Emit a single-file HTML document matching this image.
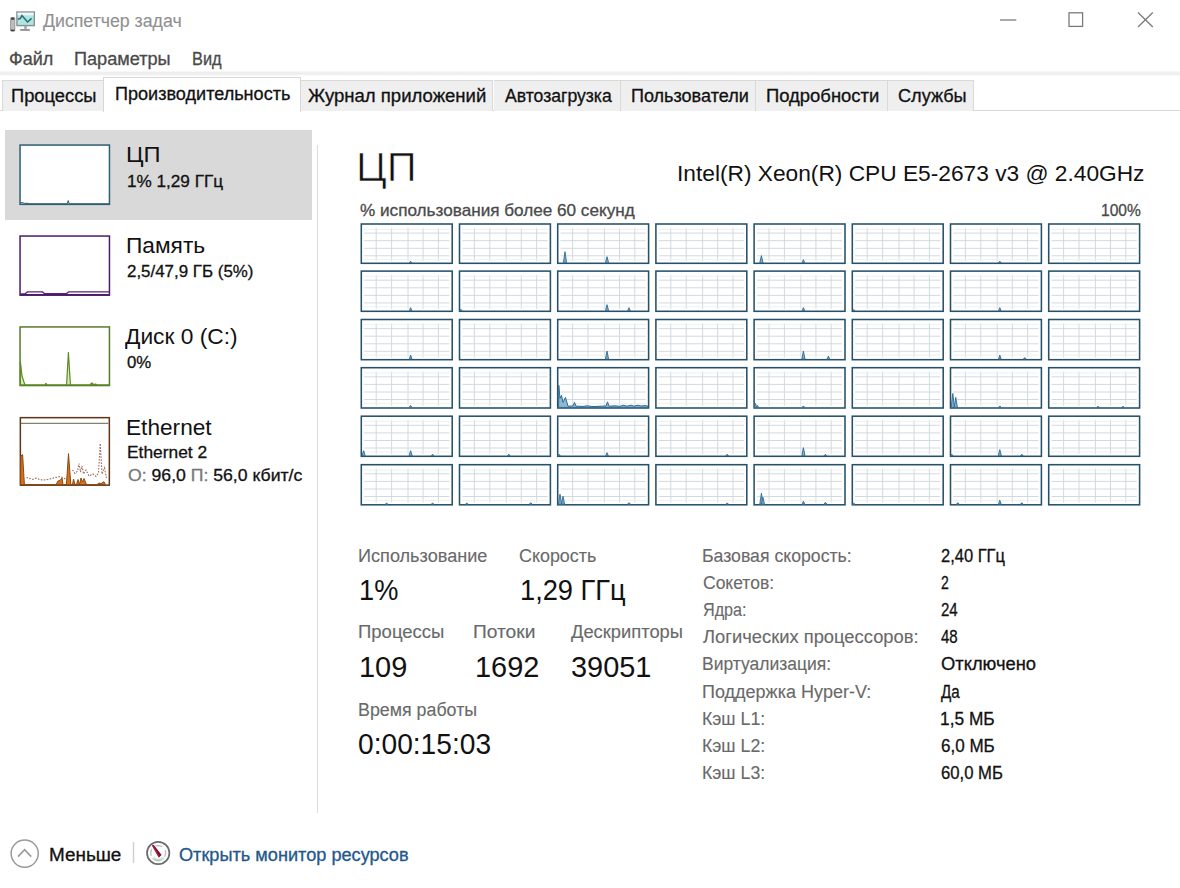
<!DOCTYPE html>
<html lang="ru"><head><meta charset="utf-8"><title>Диспетчер задач</title>
<style>
html,body{margin:0;padding:0;}
body{width:1180px;height:888px;position:relative;overflow:hidden;background:#fff;font-family:"Liberation Sans",sans-serif;}
.t{position:absolute;white-space:nowrap;transform-origin:0 0;display:block;}
.a{position:absolute;}
svg{position:absolute;left:0;top:0;}
.tab{top:80.3px;height:30.5px;box-sizing:border-box;border:1.2px solid #d9d9d9;border-bottom:none;background:#efefef;}
.s{-webkit-text-stroke:0.3px currentColor;}
.thin{-webkit-text-stroke:0.7px #fff;}
.g{-webkit-text-stroke:0.12px currentColor;}

</style></head>
<body>
<svg width="60" height="45" viewBox="0 0 60 45">
<rect x="10.6" y="17.5" width="4.2" height="13.6" rx="1" fill="#bdbdbd" stroke="#8a8a8a" stroke-width="0.8"/>
<rect x="11.2" y="17.6" width="3" height="2.2" fill="#444"/>
<rect x="10.8" y="29.6" width="3.8" height="1.6" fill="#444"/>
<rect x="16.9" y="12" width="17.4" height="13.6" fill="#aee6e4" stroke="#8a8f92" stroke-width="1.4"/>
<rect x="17.6" y="12.7" width="16" height="2.6" fill="#f4f4f8"/>
<polyline points="18,19.2 20.4,18.4 22,15.6 27.5,22 31.6,18.4" fill="none" stroke="#2b6a6e" stroke-width="1.5"/>
<rect x="24.2" y="26.2" width="2.6" height="2.6" fill="#9aa0a3"/>
<rect x="20.2" y="29.2" width="9.6" height="1.5" fill="#777"/>
</svg>
<svg width="1180" height="40" viewBox="0 0 1180 40">
<line x1="1000" y1="20" x2="1016.3" y2="20" stroke="#7a7a7a" stroke-width="1.3"/>
<rect x="1069" y="12.8" width="13.6" height="13.6" fill="none" stroke="#7a7a7a" stroke-width="1.3"/>
<path d="M1138 12.5 L1152.8 27 M1152.8 12.5 L1138 27" stroke="#7a7a7a" stroke-width="1.3" fill="none"/>
</svg>
<div class="a" style="left:0;top:70.5px;width:1180px;height:5px;background:linear-gradient(#fafafa,#ececec 45%,#eeeeee 60%,#fbfbfb)"></div>
<div class="a" style="left:0;top:110.2px;width:1180px;height:1.2px;background:#d7d7d7"></div>
<div class="a tab" style="left:1.8px;width:102.0px;"></div>
<div class="a tab" style="left:300.7px;width:192.8px;border-left:none;"></div>
<div class="a tab" style="left:493.5px;width:127.5px;border-left:none;"></div>
<div class="a tab" style="left:621.0px;width:135.4px;border-left:none;"></div>
<div class="a tab" style="left:756.4px;width:131.4px;border-left:none;"></div>
<div class="a tab" style="left:887.8px;width:86.2px;border-left:none;"></div>
<div class="a" style="left:103.3px;top:77.2px;width:197.9px;height:34.6px;box-sizing:border-box;border:1.2px solid #d7d7d7;border-bottom:none;background:#fff"></div>
<div class="a" style="left:5px;top:130px;width:307px;height:89.5px;background:#d9d9d9"></div>
<div class="a" style="left:316.8px;top:144.5px;width:1.3px;height:668px;background:#dcdcdc"></div>
<svg width="330" height="500" viewBox="0 0 330 500">
<rect x="20.05" y="145.05" width="89.4" height="59.3" fill="#fff" stroke="#2b6075" stroke-width="1.5"/>
<polyline points="20.5,203.4 21,202.6 23,202.8 24.5,203.4 27,203.2 29,203.8 67.2,203.8 68.2,200.6 69.2,203.8 109,203.8" fill="none" stroke="#2d5a6b" stroke-width="1"/>
<rect x="20.05" y="236.05" width="89.4" height="59.1" fill="#fff" stroke="#4d1a6a" stroke-width="1.5"/>
<path d="M20.5,293.8 L25,293.8 L27.5,291.9 L42.5,291.9 L44.5,293.6 L66.5,293.6 L68.7,291.9 L109,291.9" fill="none" stroke="#5a2278" stroke-width="1.3"/>
<rect x="20" y="294" width="89.5" height="1.6" fill="#4d1a6a"/>
<rect x="20.05" y="326.95" width="89.4" height="58.6" fill="#fff" stroke="#587a2c" stroke-width="1.5"/>
<path d="M20.4,384.8 L20.4,362 L22,376 L24.8,384.6 L45,384.8 L45.9,383.4 L46.8,384.8 L66.6,384.8 L68.4,352.5 L70.4,384.8 L90,384.8 L92,383 L93.5,384.6 L95.5,384 L97,384.8 L109,384.8 Z" fill="#d8ecb8" stroke="#5b8a24" stroke-width="1.2" stroke-linejoin="round"/>
<rect x="20.35" y="417.65" width="89" height="67.5" fill="#fff" stroke="#5e3516" stroke-width="1.5"/>
<line x1="21" y1="423.4" x2="108.6" y2="423.4" stroke="#83836a" stroke-width="1.2"/>
<path d="M20.6,484.6 L20.8,456 L22.6,454.6 L24.4,484.6 L56,484.6 L58,481 L60,480.4 L62,478 L63,484.6 L66.4,484.6 L68.5,453.6 L70.8,484.6 L72.5,484.6 L73.5,479 L75,484.6 L76.5,484.6 L78,479.5 L79.5,484.6 L81,478 L82.5,482 L84,478.5 L86.5,484.6 L97,484.6 L99,483 L101,483.6 L104,481.8 L105.5,484.6 Z" fill="#d9701c" stroke="#8a4a14" stroke-width="1" stroke-linejoin="round"/>
<path d="M26.5,477.4 L30,478.6 L33,479.4 L36,478.2 L40,479.6 L44,480 L48,479.4 L52,478.4 L56,477.4 L60,476.6 L63,477.6 L66,479.5 M72.5,470 L75,473.5 L77.5,471 L79,463.5 L80.5,472 L82,466 L83.5,474 L86,470 L89,476 L93,474 L96,476.5 L98.5,473 L100.2,443.5 L102,474 L104.5,468 L106.5,478" fill="none" stroke="#9a6a5a" stroke-width="1.1" stroke-dasharray="1.6 1.4"/>
</svg>
<svg width="1180" height="520" viewBox="0 0 1180 520">
<g transform="translate(360.60 223.30)">
<rect x="0.7" y="0.7" width="90.9" height="39.3" fill="#fff" stroke="#25516a" stroke-width="1.55"/>
<path d="M15.6,4.5V37.7M31.0,4.5V37.7M47.4,4.5V37.7M62.5,4.5V37.7M77.8,4.5V37.7M3.5,9.8H88.8M3.5,17.4H88.8M3.5,25.0H88.8M3.5,32.5H88.8" stroke="#cdd6db" stroke-width="0.9" fill="none"/>
<path d="M3.5,5.9H88.8M3.5,36.4H88.8" stroke="#ebeff1" stroke-width="0.9" fill="none"/>
<polygon points="48.7,39.4 50.0,37.9 51.3,39.4" fill="#7fb0d0" stroke="#2e6a8e" stroke-width="0.9" stroke-linejoin="round"/>
</g>
<g transform="translate(458.80 223.30)">
<rect x="0.7" y="0.7" width="90.9" height="39.3" fill="#fff" stroke="#25516a" stroke-width="1.55"/>
<path d="M15.6,4.5V37.7M31.0,4.5V37.7M47.4,4.5V37.7M62.5,4.5V37.7M77.8,4.5V37.7M3.5,9.8H88.8M3.5,17.4H88.8M3.5,25.0H88.8M3.5,32.5H88.8" stroke="#cdd6db" stroke-width="0.9" fill="none"/>
<path d="M3.5,5.9H88.8M3.5,36.4H88.8" stroke="#ebeff1" stroke-width="0.9" fill="none"/>
</g>
<g transform="translate(557.00 223.30)">
<rect x="0.7" y="0.7" width="90.9" height="39.3" fill="#fff" stroke="#25516a" stroke-width="1.55"/>
<path d="M15.6,4.5V37.7M31.0,4.5V37.7M47.4,4.5V37.7M62.5,4.5V37.7M77.8,4.5V37.7M3.5,9.8H88.8M3.5,17.4H88.8M3.5,25.0H88.8M3.5,32.5H88.8" stroke="#cdd6db" stroke-width="0.9" fill="none"/>
<path d="M3.5,5.9H88.8M3.5,36.4H88.8" stroke="#ebeff1" stroke-width="0.9" fill="none"/>
<polygon points="6.4,39.4 8.0,28.4 9.6,39.4" fill="#7fb0d0" stroke="#2e6a8e" stroke-width="0.9" stroke-linejoin="round"/>
<polygon points="48.4,39.4 50.0,33.4 51.6,39.4" fill="#7fb0d0" stroke="#2e6a8e" stroke-width="0.9" stroke-linejoin="round"/>
</g>
<g transform="translate(655.20 223.30)">
<rect x="0.7" y="0.7" width="90.9" height="39.3" fill="#fff" stroke="#25516a" stroke-width="1.55"/>
<path d="M15.6,4.5V37.7M31.0,4.5V37.7M47.4,4.5V37.7M62.5,4.5V37.7M77.8,4.5V37.7M3.5,9.8H88.8M3.5,17.4H88.8M3.5,25.0H88.8M3.5,32.5H88.8" stroke="#cdd6db" stroke-width="0.9" fill="none"/>
<path d="M3.5,5.9H88.8M3.5,36.4H88.8" stroke="#ebeff1" stroke-width="0.9" fill="none"/>
</g>
<g transform="translate(753.40 223.30)">
<rect x="0.7" y="0.7" width="90.9" height="39.3" fill="#fff" stroke="#25516a" stroke-width="1.55"/>
<path d="M15.6,4.5V37.7M31.0,4.5V37.7M47.4,4.5V37.7M62.5,4.5V37.7M77.8,4.5V37.7M3.5,9.8H88.8M3.5,17.4H88.8M3.5,25.0H88.8M3.5,32.5H88.8" stroke="#cdd6db" stroke-width="0.9" fill="none"/>
<path d="M3.5,5.9H88.8M3.5,36.4H88.8" stroke="#ebeff1" stroke-width="0.9" fill="none"/>
<polygon points="6.4,39.4 8.0,32.4 9.6,39.4" fill="#7fb0d0" stroke="#2e6a8e" stroke-width="0.9" stroke-linejoin="round"/>
<polygon points="48.7,39.4 50.0,36.4 51.3,39.4" fill="#7fb0d0" stroke="#2e6a8e" stroke-width="0.9" stroke-linejoin="round"/>
</g>
<g transform="translate(851.60 223.30)">
<rect x="0.7" y="0.7" width="90.9" height="39.3" fill="#fff" stroke="#25516a" stroke-width="1.55"/>
<path d="M15.6,4.5V37.7M31.0,4.5V37.7M47.4,4.5V37.7M62.5,4.5V37.7M77.8,4.5V37.7M3.5,9.8H88.8M3.5,17.4H88.8M3.5,25.0H88.8M3.5,32.5H88.8" stroke="#cdd6db" stroke-width="0.9" fill="none"/>
<path d="M3.5,5.9H88.8M3.5,36.4H88.8" stroke="#ebeff1" stroke-width="0.9" fill="none"/>
</g>
<g transform="translate(949.80 223.30)">
<rect x="0.7" y="0.7" width="90.9" height="39.3" fill="#fff" stroke="#25516a" stroke-width="1.55"/>
<path d="M15.6,4.5V37.7M31.0,4.5V37.7M47.4,4.5V37.7M62.5,4.5V37.7M77.8,4.5V37.7M3.5,9.8H88.8M3.5,17.4H88.8M3.5,25.0H88.8M3.5,32.5H88.8" stroke="#cdd6db" stroke-width="0.9" fill="none"/>
<path d="M3.5,5.9H88.8M3.5,36.4H88.8" stroke="#ebeff1" stroke-width="0.9" fill="none"/>
<polygon points="48.7,39.4 50.0,37.9 51.3,39.4" fill="#7fb0d0" stroke="#2e6a8e" stroke-width="0.9" stroke-linejoin="round"/>
</g>
<g transform="translate(1048.00 223.30)">
<rect x="0.7" y="0.7" width="90.9" height="39.3" fill="#fff" stroke="#25516a" stroke-width="1.55"/>
<path d="M15.6,4.5V37.7M31.0,4.5V37.7M47.4,4.5V37.7M62.5,4.5V37.7M77.8,4.5V37.7M3.5,9.8H88.8M3.5,17.4H88.8M3.5,25.0H88.8M3.5,32.5H88.8" stroke="#cdd6db" stroke-width="0.9" fill="none"/>
<path d="M3.5,5.9H88.8M3.5,36.4H88.8" stroke="#ebeff1" stroke-width="0.9" fill="none"/>
</g>
<g transform="translate(360.60 270.40)">
<rect x="0.7" y="0.7" width="90.9" height="40.2" fill="#fff" stroke="#25516a" stroke-width="1.55"/>
<path d="M15.6,4.5V38.6M31.0,4.5V38.6M47.4,4.5V38.6M62.5,4.5V38.6M77.8,4.5V38.6M3.5,9.8H88.8M3.5,17.4H88.8M3.5,25.0H88.8M3.5,32.5H88.8" stroke="#cdd6db" stroke-width="0.9" fill="none"/>
<path d="M3.5,5.9H88.8M3.5,36.4H88.8" stroke="#ebeff1" stroke-width="0.9" fill="none"/>
<polygon points="48.7,40.3 50.0,37.3 51.3,40.3" fill="#7fb0d0" stroke="#2e6a8e" stroke-width="0.9" stroke-linejoin="round"/>
</g>
<g transform="translate(458.80 270.40)">
<rect x="0.7" y="0.7" width="90.9" height="40.2" fill="#fff" stroke="#25516a" stroke-width="1.55"/>
<path d="M15.6,4.5V38.6M31.0,4.5V38.6M47.4,4.5V38.6M62.5,4.5V38.6M77.8,4.5V38.6M3.5,9.8H88.8M3.5,17.4H88.8M3.5,25.0H88.8M3.5,32.5H88.8" stroke="#cdd6db" stroke-width="0.9" fill="none"/>
<path d="M3.5,5.9H88.8M3.5,36.4H88.8" stroke="#ebeff1" stroke-width="0.9" fill="none"/>
<polygon points="0.7,40.3 2.0,38.8 3.3,40.3" fill="#7fb0d0" stroke="#2e6a8e" stroke-width="0.9" stroke-linejoin="round"/>
</g>
<g transform="translate(557.00 270.40)">
<rect x="0.7" y="0.7" width="90.9" height="40.2" fill="#fff" stroke="#25516a" stroke-width="1.55"/>
<path d="M15.6,4.5V38.6M31.0,4.5V38.6M47.4,4.5V38.6M62.5,4.5V38.6M77.8,4.5V38.6M3.5,9.8H88.8M3.5,17.4H88.8M3.5,25.0H88.8M3.5,32.5H88.8" stroke="#cdd6db" stroke-width="0.9" fill="none"/>
<path d="M3.5,5.9H88.8M3.5,36.4H88.8" stroke="#ebeff1" stroke-width="0.9" fill="none"/>
<polygon points="48.4,40.3 50.0,34.3 51.6,40.3" fill="#7fb0d0" stroke="#2e6a8e" stroke-width="0.9" stroke-linejoin="round"/>
<polygon points="70.7,40.3 72.0,37.3 73.3,40.3" fill="#7fb0d0" stroke="#2e6a8e" stroke-width="0.9" stroke-linejoin="round"/>
</g>
<g transform="translate(655.20 270.40)">
<rect x="0.7" y="0.7" width="90.9" height="40.2" fill="#fff" stroke="#25516a" stroke-width="1.55"/>
<path d="M15.6,4.5V38.6M31.0,4.5V38.6M47.4,4.5V38.6M62.5,4.5V38.6M77.8,4.5V38.6M3.5,9.8H88.8M3.5,17.4H88.8M3.5,25.0H88.8M3.5,32.5H88.8" stroke="#cdd6db" stroke-width="0.9" fill="none"/>
<path d="M3.5,5.9H88.8M3.5,36.4H88.8" stroke="#ebeff1" stroke-width="0.9" fill="none"/>
</g>
<g transform="translate(753.40 270.40)">
<rect x="0.7" y="0.7" width="90.9" height="40.2" fill="#fff" stroke="#25516a" stroke-width="1.55"/>
<path d="M15.6,4.5V38.6M31.0,4.5V38.6M47.4,4.5V38.6M62.5,4.5V38.6M77.8,4.5V38.6M3.5,9.8H88.8M3.5,17.4H88.8M3.5,25.0H88.8M3.5,32.5H88.8" stroke="#cdd6db" stroke-width="0.9" fill="none"/>
<path d="M3.5,5.9H88.8M3.5,36.4H88.8" stroke="#ebeff1" stroke-width="0.9" fill="none"/>
<polygon points="48.7,40.3 50.0,37.3 51.3,40.3" fill="#7fb0d0" stroke="#2e6a8e" stroke-width="0.9" stroke-linejoin="round"/>
</g>
<g transform="translate(851.60 270.40)">
<rect x="0.7" y="0.7" width="90.9" height="40.2" fill="#fff" stroke="#25516a" stroke-width="1.55"/>
<path d="M15.6,4.5V38.6M31.0,4.5V38.6M47.4,4.5V38.6M62.5,4.5V38.6M77.8,4.5V38.6M3.5,9.8H88.8M3.5,17.4H88.8M3.5,25.0H88.8M3.5,32.5H88.8" stroke="#cdd6db" stroke-width="0.9" fill="none"/>
<path d="M3.5,5.9H88.8M3.5,36.4H88.8" stroke="#ebeff1" stroke-width="0.9" fill="none"/>
<polygon points="0.7,40.3 2.0,39.3 3.3,40.3" fill="#7fb0d0" stroke="#2e6a8e" stroke-width="0.9" stroke-linejoin="round"/>
</g>
<g transform="translate(949.80 270.40)">
<rect x="0.7" y="0.7" width="90.9" height="40.2" fill="#fff" stroke="#25516a" stroke-width="1.55"/>
<path d="M15.6,4.5V38.6M31.0,4.5V38.6M47.4,4.5V38.6M62.5,4.5V38.6M77.8,4.5V38.6M3.5,9.8H88.8M3.5,17.4H88.8M3.5,25.0H88.8M3.5,32.5H88.8" stroke="#cdd6db" stroke-width="0.9" fill="none"/>
<path d="M3.5,5.9H88.8M3.5,36.4H88.8" stroke="#ebeff1" stroke-width="0.9" fill="none"/>
<polygon points="48.7,40.3 50.0,37.3 51.3,40.3" fill="#7fb0d0" stroke="#2e6a8e" stroke-width="0.9" stroke-linejoin="round"/>
</g>
<g transform="translate(1048.00 270.40)">
<rect x="0.7" y="0.7" width="90.9" height="40.2" fill="#fff" stroke="#25516a" stroke-width="1.55"/>
<path d="M15.6,4.5V38.6M31.0,4.5V38.6M47.4,4.5V38.6M62.5,4.5V38.6M77.8,4.5V38.6M3.5,9.8H88.8M3.5,17.4H88.8M3.5,25.0H88.8M3.5,32.5H88.8" stroke="#cdd6db" stroke-width="0.9" fill="none"/>
<path d="M3.5,5.9H88.8M3.5,36.4H88.8" stroke="#ebeff1" stroke-width="0.9" fill="none"/>
</g>
<g transform="translate(360.60 318.80)">
<rect x="0.7" y="0.7" width="90.9" height="40.2" fill="#fff" stroke="#25516a" stroke-width="1.55"/>
<path d="M15.6,4.5V38.6M31.0,4.5V38.6M47.4,4.5V38.6M62.5,4.5V38.6M77.8,4.5V38.6M3.5,9.8H88.8M3.5,17.4H88.8M3.5,25.0H88.8M3.5,32.5H88.8" stroke="#cdd6db" stroke-width="0.9" fill="none"/>
<path d="M3.5,5.9H88.8M3.5,36.4H88.8" stroke="#ebeff1" stroke-width="0.9" fill="none"/>
<polygon points="48.7,40.3 50.0,36.3 51.3,40.3" fill="#7fb0d0" stroke="#2e6a8e" stroke-width="0.9" stroke-linejoin="round"/>
</g>
<g transform="translate(458.80 318.80)">
<rect x="0.7" y="0.7" width="90.9" height="40.2" fill="#fff" stroke="#25516a" stroke-width="1.55"/>
<path d="M15.6,4.5V38.6M31.0,4.5V38.6M47.4,4.5V38.6M62.5,4.5V38.6M77.8,4.5V38.6M3.5,9.8H88.8M3.5,17.4H88.8M3.5,25.0H88.8M3.5,32.5H88.8" stroke="#cdd6db" stroke-width="0.9" fill="none"/>
<path d="M3.5,5.9H88.8M3.5,36.4H88.8" stroke="#ebeff1" stroke-width="0.9" fill="none"/>
</g>
<g transform="translate(557.00 318.80)">
<rect x="0.7" y="0.7" width="90.9" height="40.2" fill="#fff" stroke="#25516a" stroke-width="1.55"/>
<path d="M15.6,4.5V38.6M31.0,4.5V38.6M47.4,4.5V38.6M62.5,4.5V38.6M77.8,4.5V38.6M3.5,9.8H88.8M3.5,17.4H88.8M3.5,25.0H88.8M3.5,32.5H88.8" stroke="#cdd6db" stroke-width="0.9" fill="none"/>
<path d="M3.5,5.9H88.8M3.5,36.4H88.8" stroke="#ebeff1" stroke-width="0.9" fill="none"/>
<polygon points="48.4,40.3 50.0,32.3 51.6,40.3" fill="#7fb0d0" stroke="#2e6a8e" stroke-width="0.9" stroke-linejoin="round"/>
</g>
<g transform="translate(655.20 318.80)">
<rect x="0.7" y="0.7" width="90.9" height="40.2" fill="#fff" stroke="#25516a" stroke-width="1.55"/>
<path d="M15.6,4.5V38.6M31.0,4.5V38.6M47.4,4.5V38.6M62.5,4.5V38.6M77.8,4.5V38.6M3.5,9.8H88.8M3.5,17.4H88.8M3.5,25.0H88.8M3.5,32.5H88.8" stroke="#cdd6db" stroke-width="0.9" fill="none"/>
<path d="M3.5,5.9H88.8M3.5,36.4H88.8" stroke="#ebeff1" stroke-width="0.9" fill="none"/>
</g>
<g transform="translate(753.40 318.80)">
<rect x="0.7" y="0.7" width="90.9" height="40.2" fill="#fff" stroke="#25516a" stroke-width="1.55"/>
<path d="M15.6,4.5V38.6M31.0,4.5V38.6M47.4,4.5V38.6M62.5,4.5V38.6M77.8,4.5V38.6M3.5,9.8H88.8M3.5,17.4H88.8M3.5,25.0H88.8M3.5,32.5H88.8" stroke="#cdd6db" stroke-width="0.9" fill="none"/>
<path d="M3.5,5.9H88.8M3.5,36.4H88.8" stroke="#ebeff1" stroke-width="0.9" fill="none"/>
<polygon points="48.4,40.3 50.0,32.3 51.6,40.3" fill="#7fb0d0" stroke="#2e6a8e" stroke-width="0.9" stroke-linejoin="round"/>
<polygon points="73.7,40.3 75.0,37.3 76.3,40.3" fill="#7fb0d0" stroke="#2e6a8e" stroke-width="0.9" stroke-linejoin="round"/>
</g>
<g transform="translate(851.60 318.80)">
<rect x="0.7" y="0.7" width="90.9" height="40.2" fill="#fff" stroke="#25516a" stroke-width="1.55"/>
<path d="M15.6,4.5V38.6M31.0,4.5V38.6M47.4,4.5V38.6M62.5,4.5V38.6M77.8,4.5V38.6M3.5,9.8H88.8M3.5,17.4H88.8M3.5,25.0H88.8M3.5,32.5H88.8" stroke="#cdd6db" stroke-width="0.9" fill="none"/>
<path d="M3.5,5.9H88.8M3.5,36.4H88.8" stroke="#ebeff1" stroke-width="0.9" fill="none"/>
</g>
<g transform="translate(949.80 318.80)">
<rect x="0.7" y="0.7" width="90.9" height="40.2" fill="#fff" stroke="#25516a" stroke-width="1.55"/>
<path d="M15.6,4.5V38.6M31.0,4.5V38.6M47.4,4.5V38.6M62.5,4.5V38.6M77.8,4.5V38.6M3.5,9.8H88.8M3.5,17.4H88.8M3.5,25.0H88.8M3.5,32.5H88.8" stroke="#cdd6db" stroke-width="0.9" fill="none"/>
<path d="M3.5,5.9H88.8M3.5,36.4H88.8" stroke="#ebeff1" stroke-width="0.9" fill="none"/>
<polygon points="48.7,40.3 50.0,36.3 51.3,40.3" fill="#7fb0d0" stroke="#2e6a8e" stroke-width="0.9" stroke-linejoin="round"/>
<polygon points="73.7,40.3 75.0,38.8 76.3,40.3" fill="#7fb0d0" stroke="#2e6a8e" stroke-width="0.9" stroke-linejoin="round"/>
</g>
<g transform="translate(1048.00 318.80)">
<rect x="0.7" y="0.7" width="90.9" height="40.2" fill="#fff" stroke="#25516a" stroke-width="1.55"/>
<path d="M15.6,4.5V38.6M31.0,4.5V38.6M47.4,4.5V38.6M62.5,4.5V38.6M77.8,4.5V38.6M3.5,9.8H88.8M3.5,17.4H88.8M3.5,25.0H88.8M3.5,32.5H88.8" stroke="#cdd6db" stroke-width="0.9" fill="none"/>
<path d="M3.5,5.9H88.8M3.5,36.4H88.8" stroke="#ebeff1" stroke-width="0.9" fill="none"/>
</g>
<g transform="translate(360.60 367.00)">
<rect x="0.7" y="0.7" width="90.9" height="40.3" fill="#fff" stroke="#25516a" stroke-width="1.55"/>
<path d="M15.6,4.5V38.7M31.0,4.5V38.7M47.4,4.5V38.7M62.5,4.5V38.7M77.8,4.5V38.7M3.5,9.8H88.8M3.5,17.4H88.8M3.5,25.0H88.8M3.5,32.5H88.8" stroke="#cdd6db" stroke-width="0.9" fill="none"/>
<path d="M3.5,5.9H88.8M3.5,36.4H88.8" stroke="#ebeff1" stroke-width="0.9" fill="none"/>
<polygon points="48.7,40.4 50.0,38.4 51.3,40.4" fill="#7fb0d0" stroke="#2e6a8e" stroke-width="0.9" stroke-linejoin="round"/>
</g>
<g transform="translate(458.80 367.00)">
<rect x="0.7" y="0.7" width="90.9" height="40.3" fill="#fff" stroke="#25516a" stroke-width="1.55"/>
<path d="M15.6,4.5V38.7M31.0,4.5V38.7M47.4,4.5V38.7M62.5,4.5V38.7M77.8,4.5V38.7M3.5,9.8H88.8M3.5,17.4H88.8M3.5,25.0H88.8M3.5,32.5H88.8" stroke="#cdd6db" stroke-width="0.9" fill="none"/>
<path d="M3.5,5.9H88.8M3.5,36.4H88.8" stroke="#ebeff1" stroke-width="0.9" fill="none"/>
</g>
<g transform="translate(557.00 367.00)">
<rect x="0.7" y="0.7" width="90.9" height="40.3" fill="#fff" stroke="#25516a" stroke-width="1.55"/>
<path d="M15.6,4.5V38.7M31.0,4.5V38.7M47.4,4.5V38.7M62.5,4.5V38.7M77.8,4.5V38.7M3.5,9.8H88.8M3.5,17.4H88.8M3.5,25.0H88.8M3.5,32.5H88.8" stroke="#cdd6db" stroke-width="0.9" fill="none"/>
<path d="M3.5,5.9H88.8M3.5,36.4H88.8" stroke="#ebeff1" stroke-width="0.9" fill="none"/>
<polygon points="1.6,40.4 1.8,18.4 3.0,31.4 4.5,28.4 6.0,35.4 8.5,30.4 11.0,39.2 16.0,38.9 17.5,35.4 19.0,39.2 26.0,39.4 30.0,38.8 36.0,39.6 44.0,39.2 49.0,39.0 50.5,34.9 52.0,39.2 58.0,38.8 63.0,39.4 66.0,38.2 70.0,39.2 74.0,38.2 77.0,39.2 81.0,38.2 84.0,39.0 88.0,38.6 90.7,39.0 90.7,40.4" fill="#8fb8d4" stroke="#2e6a8e" stroke-width="1"/>
</g>
<g transform="translate(655.20 367.00)">
<rect x="0.7" y="0.7" width="90.9" height="40.3" fill="#fff" stroke="#25516a" stroke-width="1.55"/>
<path d="M15.6,4.5V38.7M31.0,4.5V38.7M47.4,4.5V38.7M62.5,4.5V38.7M77.8,4.5V38.7M3.5,9.8H88.8M3.5,17.4H88.8M3.5,25.0H88.8M3.5,32.5H88.8" stroke="#cdd6db" stroke-width="0.9" fill="none"/>
<path d="M3.5,5.9H88.8M3.5,36.4H88.8" stroke="#ebeff1" stroke-width="0.9" fill="none"/>
</g>
<g transform="translate(753.40 367.00)">
<rect x="0.7" y="0.7" width="90.9" height="40.3" fill="#fff" stroke="#25516a" stroke-width="1.55"/>
<path d="M15.6,4.5V38.7M31.0,4.5V38.7M47.4,4.5V38.7M62.5,4.5V38.7M77.8,4.5V38.7M3.5,9.8H88.8M3.5,17.4H88.8M3.5,25.0H88.8M3.5,32.5H88.8" stroke="#cdd6db" stroke-width="0.9" fill="none"/>
<path d="M3.5,5.9H88.8M3.5,36.4H88.8" stroke="#ebeff1" stroke-width="0.9" fill="none"/>
<polygon points="0.7,40.4 2.0,36.4 3.3,40.4" fill="#7fb0d0" stroke="#2e6a8e" stroke-width="0.9" stroke-linejoin="round"/>
<polygon points="2.7,40.4 4.0,38.4 5.3,40.4" fill="#7fb0d0" stroke="#2e6a8e" stroke-width="0.9" stroke-linejoin="round"/>
<polygon points="48.7,40.4 50.0,38.9 51.3,40.4" fill="#7fb0d0" stroke="#2e6a8e" stroke-width="0.9" stroke-linejoin="round"/>
</g>
<g transform="translate(851.60 367.00)">
<rect x="0.7" y="0.7" width="90.9" height="40.3" fill="#fff" stroke="#25516a" stroke-width="1.55"/>
<path d="M15.6,4.5V38.7M31.0,4.5V38.7M47.4,4.5V38.7M62.5,4.5V38.7M77.8,4.5V38.7M3.5,9.8H88.8M3.5,17.4H88.8M3.5,25.0H88.8M3.5,32.5H88.8" stroke="#cdd6db" stroke-width="0.9" fill="none"/>
<path d="M3.5,5.9H88.8M3.5,36.4H88.8" stroke="#ebeff1" stroke-width="0.9" fill="none"/>
</g>
<g transform="translate(949.80 367.00)">
<rect x="0.7" y="0.7" width="90.9" height="40.3" fill="#fff" stroke="#25516a" stroke-width="1.55"/>
<path d="M15.6,4.5V38.7M31.0,4.5V38.7M47.4,4.5V38.7M62.5,4.5V38.7M77.8,4.5V38.7M3.5,9.8H88.8M3.5,17.4H88.8M3.5,25.0H88.8M3.5,32.5H88.8" stroke="#cdd6db" stroke-width="0.9" fill="none"/>
<path d="M3.5,5.9H88.8M3.5,36.4H88.8" stroke="#ebeff1" stroke-width="0.9" fill="none"/>
<polygon points="1.4,40.4 3.0,26.4 4.6,40.4" fill="#7fb0d0" stroke="#2e6a8e" stroke-width="0.9" stroke-linejoin="round"/>
<polygon points="4.4,40.4 6.0,30.4 7.6,40.4" fill="#7fb0d0" stroke="#2e6a8e" stroke-width="0.9" stroke-linejoin="round"/>
<polygon points="48.7,40.4 50.0,38.9 51.3,40.4" fill="#7fb0d0" stroke="#2e6a8e" stroke-width="0.9" stroke-linejoin="round"/>
</g>
<g transform="translate(1048.00 367.00)">
<rect x="0.7" y="0.7" width="90.9" height="40.3" fill="#fff" stroke="#25516a" stroke-width="1.55"/>
<path d="M15.6,4.5V38.7M31.0,4.5V38.7M47.4,4.5V38.7M62.5,4.5V38.7M77.8,4.5V38.7M3.5,9.8H88.8M3.5,17.4H88.8M3.5,25.0H88.8M3.5,32.5H88.8" stroke="#cdd6db" stroke-width="0.9" fill="none"/>
<path d="M3.5,5.9H88.8M3.5,36.4H88.8" stroke="#ebeff1" stroke-width="0.9" fill="none"/>
<polygon points="48.7,40.4 50.0,39.4 51.3,40.4" fill="#7fb0d0" stroke="#2e6a8e" stroke-width="0.9" stroke-linejoin="round"/>
<polygon points="73.7,40.4 75.0,39.4 76.3,40.4" fill="#7fb0d0" stroke="#2e6a8e" stroke-width="0.9" stroke-linejoin="round"/>
</g>
<g transform="translate(360.60 415.50)">
<rect x="0.7" y="0.7" width="90.9" height="40.1" fill="#fff" stroke="#25516a" stroke-width="1.55"/>
<path d="M15.6,4.5V38.5M31.0,4.5V38.5M47.4,4.5V38.5M62.5,4.5V38.5M77.8,4.5V38.5M3.5,9.8H88.8M3.5,17.4H88.8M3.5,25.0H88.8M3.5,32.5H88.8" stroke="#cdd6db" stroke-width="0.9" fill="none"/>
<path d="M3.5,5.9H88.8M3.5,36.4H88.8" stroke="#ebeff1" stroke-width="0.9" fill="none"/>
<polygon points="1.4,40.2 3.0,35.2 4.6,40.2" fill="#7fb0d0" stroke="#2e6a8e" stroke-width="0.9" stroke-linejoin="round"/>
<polygon points="48.4,40.2 50.0,35.2 51.6,40.2" fill="#7fb0d0" stroke="#2e6a8e" stroke-width="0.9" stroke-linejoin="round"/>
<polygon points="70.7,40.2 72.0,38.7 73.3,40.2" fill="#7fb0d0" stroke="#2e6a8e" stroke-width="0.9" stroke-linejoin="round"/>
</g>
<g transform="translate(458.80 415.50)">
<rect x="0.7" y="0.7" width="90.9" height="40.1" fill="#fff" stroke="#25516a" stroke-width="1.55"/>
<path d="M15.6,4.5V38.5M31.0,4.5V38.5M47.4,4.5V38.5M62.5,4.5V38.5M77.8,4.5V38.5M3.5,9.8H88.8M3.5,17.4H88.8M3.5,25.0H88.8M3.5,32.5H88.8" stroke="#cdd6db" stroke-width="0.9" fill="none"/>
<path d="M3.5,5.9H88.8M3.5,36.4H88.8" stroke="#ebeff1" stroke-width="0.9" fill="none"/>
<polygon points="48.7,40.2 50.0,38.7 51.3,40.2" fill="#7fb0d0" stroke="#2e6a8e" stroke-width="0.9" stroke-linejoin="round"/>
</g>
<g transform="translate(557.00 415.50)">
<rect x="0.7" y="0.7" width="90.9" height="40.1" fill="#fff" stroke="#25516a" stroke-width="1.55"/>
<path d="M15.6,4.5V38.5M31.0,4.5V38.5M47.4,4.5V38.5M62.5,4.5V38.5M77.8,4.5V38.5M3.5,9.8H88.8M3.5,17.4H88.8M3.5,25.0H88.8M3.5,32.5H88.8" stroke="#cdd6db" stroke-width="0.9" fill="none"/>
<path d="M3.5,5.9H88.8M3.5,36.4H88.8" stroke="#ebeff1" stroke-width="0.9" fill="none"/>
<polygon points="0.7,40.2 2.0,38.7 3.3,40.2" fill="#7fb0d0" stroke="#2e6a8e" stroke-width="0.9" stroke-linejoin="round"/>
<polygon points="48.7,40.2 50.0,37.2 51.3,40.2" fill="#7fb0d0" stroke="#2e6a8e" stroke-width="0.9" stroke-linejoin="round"/>
</g>
<g transform="translate(655.20 415.50)">
<rect x="0.7" y="0.7" width="90.9" height="40.1" fill="#fff" stroke="#25516a" stroke-width="1.55"/>
<path d="M15.6,4.5V38.5M31.0,4.5V38.5M47.4,4.5V38.5M62.5,4.5V38.5M77.8,4.5V38.5M3.5,9.8H88.8M3.5,17.4H88.8M3.5,25.0H88.8M3.5,32.5H88.8" stroke="#cdd6db" stroke-width="0.9" fill="none"/>
<path d="M3.5,5.9H88.8M3.5,36.4H88.8" stroke="#ebeff1" stroke-width="0.9" fill="none"/>
<polygon points="70.7,40.2 72.0,38.7 73.3,40.2" fill="#7fb0d0" stroke="#2e6a8e" stroke-width="0.9" stroke-linejoin="round"/>
</g>
<g transform="translate(753.40 415.50)">
<rect x="0.7" y="0.7" width="90.9" height="40.1" fill="#fff" stroke="#25516a" stroke-width="1.55"/>
<path d="M15.6,4.5V38.5M31.0,4.5V38.5M47.4,4.5V38.5M62.5,4.5V38.5M77.8,4.5V38.5M3.5,9.8H88.8M3.5,17.4H88.8M3.5,25.0H88.8M3.5,32.5H88.8" stroke="#cdd6db" stroke-width="0.9" fill="none"/>
<path d="M3.5,5.9H88.8M3.5,36.4H88.8" stroke="#ebeff1" stroke-width="0.9" fill="none"/>
<polygon points="48.4,40.2 50.0,32.2 51.6,40.2" fill="#7fb0d0" stroke="#2e6a8e" stroke-width="0.9" stroke-linejoin="round"/>
<polygon points="70.7,40.2 72.0,38.7 73.3,40.2" fill="#7fb0d0" stroke="#2e6a8e" stroke-width="0.9" stroke-linejoin="round"/>
</g>
<g transform="translate(851.60 415.50)">
<rect x="0.7" y="0.7" width="90.9" height="40.1" fill="#fff" stroke="#25516a" stroke-width="1.55"/>
<path d="M15.6,4.5V38.5M31.0,4.5V38.5M47.4,4.5V38.5M62.5,4.5V38.5M77.8,4.5V38.5M3.5,9.8H88.8M3.5,17.4H88.8M3.5,25.0H88.8M3.5,32.5H88.8" stroke="#cdd6db" stroke-width="0.9" fill="none"/>
<path d="M3.5,5.9H88.8M3.5,36.4H88.8" stroke="#ebeff1" stroke-width="0.9" fill="none"/>
</g>
<g transform="translate(949.80 415.50)">
<rect x="0.7" y="0.7" width="90.9" height="40.1" fill="#fff" stroke="#25516a" stroke-width="1.55"/>
<path d="M15.6,4.5V38.5M31.0,4.5V38.5M47.4,4.5V38.5M62.5,4.5V38.5M77.8,4.5V38.5M3.5,9.8H88.8M3.5,17.4H88.8M3.5,25.0H88.8M3.5,32.5H88.8" stroke="#cdd6db" stroke-width="0.9" fill="none"/>
<path d="M3.5,5.9H88.8M3.5,36.4H88.8" stroke="#ebeff1" stroke-width="0.9" fill="none"/>
<polygon points="0.7,40.2 2.0,38.7 3.3,40.2" fill="#7fb0d0" stroke="#2e6a8e" stroke-width="0.9" stroke-linejoin="round"/>
<polygon points="48.4,40.2 50.0,34.2 51.6,40.2" fill="#7fb0d0" stroke="#2e6a8e" stroke-width="0.9" stroke-linejoin="round"/>
<polygon points="70.7,40.2 72.0,38.7 73.3,40.2" fill="#7fb0d0" stroke="#2e6a8e" stroke-width="0.9" stroke-linejoin="round"/>
</g>
<g transform="translate(1048.00 415.50)">
<rect x="0.7" y="0.7" width="90.9" height="40.1" fill="#fff" stroke="#25516a" stroke-width="1.55"/>
<path d="M15.6,4.5V38.5M31.0,4.5V38.5M47.4,4.5V38.5M62.5,4.5V38.5M77.8,4.5V38.5M3.5,9.8H88.8M3.5,17.4H88.8M3.5,25.0H88.8M3.5,32.5H88.8" stroke="#cdd6db" stroke-width="0.9" fill="none"/>
<path d="M3.5,5.9H88.8M3.5,36.4H88.8" stroke="#ebeff1" stroke-width="0.9" fill="none"/>
</g>
<g transform="translate(360.60 464.00)">
<rect x="0.7" y="0.7" width="90.9" height="40.1" fill="#fff" stroke="#25516a" stroke-width="1.55"/>
<path d="M15.6,4.5V38.5M31.0,4.5V38.5M47.4,4.5V38.5M62.5,4.5V38.5M77.8,4.5V38.5M3.5,9.8H88.8M3.5,17.4H88.8M3.5,25.0H88.8M3.5,32.5H88.8" stroke="#cdd6db" stroke-width="0.9" fill="none"/>
<path d="M3.5,5.9H88.8M3.5,36.4H88.8" stroke="#ebeff1" stroke-width="0.9" fill="none"/>
<polygon points="24.7,40.2 26.0,39.2 27.3,40.2" fill="#7fb0d0" stroke="#2e6a8e" stroke-width="0.9" stroke-linejoin="round"/>
<polygon points="70.7,40.2 72.0,39.2 73.3,40.2" fill="#7fb0d0" stroke="#2e6a8e" stroke-width="0.9" stroke-linejoin="round"/>
</g>
<g transform="translate(458.80 464.00)">
<rect x="0.7" y="0.7" width="90.9" height="40.1" fill="#fff" stroke="#25516a" stroke-width="1.55"/>
<path d="M15.6,4.5V38.5M31.0,4.5V38.5M47.4,4.5V38.5M62.5,4.5V38.5M77.8,4.5V38.5M3.5,9.8H88.8M3.5,17.4H88.8M3.5,25.0H88.8M3.5,32.5H88.8" stroke="#cdd6db" stroke-width="0.9" fill="none"/>
<path d="M3.5,5.9H88.8M3.5,36.4H88.8" stroke="#ebeff1" stroke-width="0.9" fill="none"/>
<polygon points="6.7,40.2 8.0,39.2 9.3,40.2" fill="#7fb0d0" stroke="#2e6a8e" stroke-width="0.9" stroke-linejoin="round"/>
<polygon points="70.7,40.2 72.0,38.7 73.3,40.2" fill="#7fb0d0" stroke="#2e6a8e" stroke-width="0.9" stroke-linejoin="round"/>
</g>
<g transform="translate(557.00 464.00)">
<rect x="0.7" y="0.7" width="90.9" height="40.1" fill="#fff" stroke="#25516a" stroke-width="1.55"/>
<path d="M15.6,4.5V38.5M31.0,4.5V38.5M47.4,4.5V38.5M62.5,4.5V38.5M77.8,4.5V38.5M3.5,9.8H88.8M3.5,17.4H88.8M3.5,25.0H88.8M3.5,32.5H88.8" stroke="#cdd6db" stroke-width="0.9" fill="none"/>
<path d="M3.5,5.9H88.8M3.5,36.4H88.8" stroke="#ebeff1" stroke-width="0.9" fill="none"/>
<polygon points="1.4,40.2 3.0,30.2 4.6,40.2" fill="#7fb0d0" stroke="#2e6a8e" stroke-width="0.9" stroke-linejoin="round"/>
<polygon points="4.4,40.2 6.0,32.2 7.6,40.2" fill="#7fb0d0" stroke="#2e6a8e" stroke-width="0.9" stroke-linejoin="round"/>
<polygon points="70.7,40.2 72.0,38.7 73.3,40.2" fill="#7fb0d0" stroke="#2e6a8e" stroke-width="0.9" stroke-linejoin="round"/>
</g>
<g transform="translate(655.20 464.00)">
<rect x="0.7" y="0.7" width="90.9" height="40.1" fill="#fff" stroke="#25516a" stroke-width="1.55"/>
<path d="M15.6,4.5V38.5M31.0,4.5V38.5M47.4,4.5V38.5M62.5,4.5V38.5M77.8,4.5V38.5M3.5,9.8H88.8M3.5,17.4H88.8M3.5,25.0H88.8M3.5,32.5H88.8" stroke="#cdd6db" stroke-width="0.9" fill="none"/>
<path d="M3.5,5.9H88.8M3.5,36.4H88.8" stroke="#ebeff1" stroke-width="0.9" fill="none"/>
<polygon points="70.7,40.2 72.0,39.2 73.3,40.2" fill="#7fb0d0" stroke="#2e6a8e" stroke-width="0.9" stroke-linejoin="round"/>
</g>
<g transform="translate(753.40 464.00)">
<rect x="0.7" y="0.7" width="90.9" height="40.1" fill="#fff" stroke="#25516a" stroke-width="1.55"/>
<path d="M15.6,4.5V38.5M31.0,4.5V38.5M47.4,4.5V38.5M62.5,4.5V38.5M77.8,4.5V38.5M3.5,9.8H88.8M3.5,17.4H88.8M3.5,25.0H88.8M3.5,32.5H88.8" stroke="#cdd6db" stroke-width="0.9" fill="none"/>
<path d="M3.5,5.9H88.8M3.5,36.4H88.8" stroke="#ebeff1" stroke-width="0.9" fill="none"/>
<polygon points="6.4,40.2 8.0,29.2 9.6,40.2" fill="#7fb0d0" stroke="#2e6a8e" stroke-width="0.9" stroke-linejoin="round"/>
<polygon points="7.9,40.2 9.5,33.2 11.1,40.2" fill="#7fb0d0" stroke="#2e6a8e" stroke-width="0.9" stroke-linejoin="round"/>
<polygon points="48.7,40.2 50.0,37.2 51.3,40.2" fill="#7fb0d0" stroke="#2e6a8e" stroke-width="0.9" stroke-linejoin="round"/>
<polygon points="70.7,40.2 72.0,38.2 73.3,40.2" fill="#7fb0d0" stroke="#2e6a8e" stroke-width="0.9" stroke-linejoin="round"/>
</g>
<g transform="translate(851.60 464.00)">
<rect x="0.7" y="0.7" width="90.9" height="40.1" fill="#fff" stroke="#25516a" stroke-width="1.55"/>
<path d="M15.6,4.5V38.5M31.0,4.5V38.5M47.4,4.5V38.5M62.5,4.5V38.5M77.8,4.5V38.5M3.5,9.8H88.8M3.5,17.4H88.8M3.5,25.0H88.8M3.5,32.5H88.8" stroke="#cdd6db" stroke-width="0.9" fill="none"/>
<path d="M3.5,5.9H88.8M3.5,36.4H88.8" stroke="#ebeff1" stroke-width="0.9" fill="none"/>
<polygon points="0.7,40.2 2.0,39.2 3.3,40.2" fill="#7fb0d0" stroke="#2e6a8e" stroke-width="0.9" stroke-linejoin="round"/>
</g>
<g transform="translate(949.80 464.00)">
<rect x="0.7" y="0.7" width="90.9" height="40.1" fill="#fff" stroke="#25516a" stroke-width="1.55"/>
<path d="M15.6,4.5V38.5M31.0,4.5V38.5M47.4,4.5V38.5M62.5,4.5V38.5M77.8,4.5V38.5M3.5,9.8H88.8M3.5,17.4H88.8M3.5,25.0H88.8M3.5,32.5H88.8" stroke="#cdd6db" stroke-width="0.9" fill="none"/>
<path d="M3.5,5.9H88.8M3.5,36.4H88.8" stroke="#ebeff1" stroke-width="0.9" fill="none"/>
<polygon points="6.7,40.2 8.0,38.7 9.3,40.2" fill="#7fb0d0" stroke="#2e6a8e" stroke-width="0.9" stroke-linejoin="round"/>
<polygon points="48.7,40.2 50.0,36.2 51.3,40.2" fill="#7fb0d0" stroke="#2e6a8e" stroke-width="0.9" stroke-linejoin="round"/>
<polygon points="70.7,40.2 72.0,38.7 73.3,40.2" fill="#7fb0d0" stroke="#2e6a8e" stroke-width="0.9" stroke-linejoin="round"/>
</g>
<g transform="translate(1048.00 464.00)">
<rect x="0.7" y="0.7" width="90.9" height="40.1" fill="#fff" stroke="#25516a" stroke-width="1.55"/>
<path d="M15.6,4.5V38.5M31.0,4.5V38.5M47.4,4.5V38.5M62.5,4.5V38.5M77.8,4.5V38.5M3.5,9.8H88.8M3.5,17.4H88.8M3.5,25.0H88.8M3.5,32.5H88.8" stroke="#cdd6db" stroke-width="0.9" fill="none"/>
<path d="M3.5,5.9H88.8M3.5,36.4H88.8" stroke="#ebeff1" stroke-width="0.9" fill="none"/>
</g>
</svg>
<svg width="200" height="60" viewBox="0 0 200 60" style="top:828px">
<circle cx="24.7" cy="25.6" r="13.6" fill="#fff" stroke="#9a9a9a" stroke-width="1.5"/>
<polyline points="18,28.6 24.6,21.6 31.2,28.6" fill="none" stroke="#9a9a9a" stroke-width="1.6"/>
<line x1="133.5" y1="14" x2="133.5" y2="35" stroke="#cfcfcf" stroke-width="1.4"/>
<circle cx="158.2" cy="25" r="11.2" fill="#fdfdfd" stroke="#6b6b6b" stroke-width="1.7"/>
<path d="M151.6,30.6 A8.6 8.6 0 0 0 164.8,30.6 L162.4,28.8 A5.6 5.6 0 0 1 154,28.8 Z" fill="#c9e8da"/>
<circle cx="158.2" cy="25" r="7.4" fill="none" stroke="#b9b9b9" stroke-width="1.2" stroke-dasharray="7 4.6" stroke-dashoffset="3"/>
<polygon points="152,17.6 153.6,16.8 161.6,27 158.8,29.4" fill="#7a0c2c"/>
<polygon points="152,17.6 153,17.1 159.8,28.4 158.8,29.4" fill="#ab1c42"/>
</svg>
<!-- text -->
<span class="t g" style="left:42.70px;top:12px;font-size:17.5px;line-height:18px;color:#909090;transform:scaleX(1.0127)">Диспетчер задач</span>
<span class="t s" style="left:8.97px;top:50px;font-size:17.5px;line-height:18px;color:#4a4a4a;transform:scaleX(1.0291)">Файл</span>
<span class="t s" style="left:73.96px;top:50px;font-size:17.5px;line-height:18px;color:#4a4a4a;transform:scaleX(1.0359)">Параметры</span>
<span class="t s" style="left:191.56px;top:50px;font-size:17.5px;line-height:18px;color:#4a4a4a;transform:scaleX(0.9360)">Вид</span>
<span class="t s" style="left:10.95px;top:87px;font-size:17.5px;line-height:18px;color:#111;transform:scaleX(1.0462)">Процессы</span>
<span class="t s" style="left:115.17px;top:85px;font-size:17.5px;line-height:18px;color:#111;transform:scaleX(1.0324)">Производительность</span>
<span class="t s" style="left:307.50px;top:87px;font-size:17.5px;line-height:18px;color:#111;transform:scaleX(1.0595)">Журнал приложений</span>
<span class="t s" style="left:505.00px;top:87px;font-size:17.5px;line-height:18px;color:#111;transform:scaleX(1.0054)">Автозагрузка</span>
<span class="t s" style="left:630.57px;top:87px;font-size:17.5px;line-height:18px;color:#111;transform:scaleX(1.0307)">Пользователи</span>
<span class="t s" style="left:766.25px;top:87px;font-size:17.5px;line-height:18px;color:#111;transform:scaleX(1.0530)">Подробности</span>
<span class="t s" style="left:898.20px;top:87px;font-size:17.5px;line-height:18px;color:#111;transform:scaleX(1.0347)">Службы</span>
<span class="t" style="left:126.15px;top:143px;font-size:22.5px;line-height:23px;color:#111;transform:scaleX(1.0508)">ЦП</span>
<span class="t s" style="left:127.39px;top:173px;font-size:17px;line-height:17px;color:#111;transform:scaleX(1.0083)">1% 1,29 ГГц</span>
<span class="t" style="left:125.99px;top:234px;font-size:22.5px;line-height:23px;color:#111;transform:scaleX(1.0099)">Память</span>
<span class="t s" style="left:127.00px;top:263px;font-size:17px;line-height:17px;color:#111;transform:scaleX(0.9946)">2,5/47,9 ГБ (5%)</span>
<span class="t" style="left:125.00px;top:325px;font-size:22.5px;line-height:23px;color:#111;transform:scaleX(1.0107)">Диск 0 (C:)</span>
<span class="t s" style="left:127.10px;top:354px;font-size:17px;line-height:17px;color:#111;transform:scaleX(0.9896)">0%</span>
<span class="t" style="left:126.39px;top:416px;font-size:22.5px;line-height:23px;color:#111;transform:scaleX(1.0070)">Ethernet</span>
<span class="t s" style="left:126.78px;top:444px;font-size:17px;line-height:17px;color:#111;transform:scaleX(1.0209)">Ethernet 2</span>
<span class="t s" style="left:127.80px;top:467px;font-size:17px;line-height:17px;color:#111;transform:scaleX(1.0373)"><span style="color:#777">О:</span> 96,0 <span style="color:#777">П:</span> 56,0 кбит/с</span>
<span class="t thin" style="left:355.72px;top:147px;font-size:40.5px;line-height:41px;color:#111;transform:scaleX(1.0272)">ЦП</span>
<span class="t" style="left:676.78px;top:162px;font-size:22.5px;line-height:23px;color:#111;transform:scaleX(1.0096)">Intel(R) Xeon(R) CPU E5-2673 v3 @ 2.40GHz</span>
<span class="t s" style="left:360.30px;top:202px;font-size:16.5px;line-height:17px;color:#4a4a4a;transform:scaleX(1.0388)">% использования более 60 секунд</span>
<span class="t s" style="left:1100.66px;top:202px;font-size:16.5px;line-height:17px;color:#4a4a4a;transform:scaleX(0.9439)">100%</span>
<span class="t g" style="left:357.79px;top:547px;font-size:18px;line-height:18px;color:#696969;transform:scaleX(1.0062)">Использование</span>
<span class="t g" style="left:518.60px;top:547px;font-size:18px;line-height:18px;color:#696969;transform:scaleX(0.9941)">Скорость</span>
<span class="t" style="left:358.92px;top:576px;font-size:29px;line-height:29px;color:#111;transform:scaleX(0.9379)">1%</span>
<span class="t" style="left:519.62px;top:576px;font-size:29px;line-height:29px;color:#111;transform:scaleX(0.9390)">1,29 ГГц</span>
<span class="t g" style="left:357.77px;top:623px;font-size:18px;line-height:18px;color:#696969;transform:scaleX(1.0283)">Процессы</span>
<span class="t g" style="left:473.43px;top:623px;font-size:18px;line-height:18px;color:#696969;transform:scaleX(1.0659)">Потоки</span>
<span class="t g" style="left:571.30px;top:623px;font-size:18px;line-height:18px;color:#696969;transform:scaleX(1.0188)">Дескрипторы</span>
<span class="t" style="left:358.60px;top:653px;font-size:29px;line-height:29px;color:#111;transform:scaleX(0.9987)">109</span>
<span class="t" style="left:475.01px;top:653px;font-size:29px;line-height:29px;color:#111;transform:scaleX(0.9970)">1692</span>
<span class="t" style="left:571.00px;top:653px;font-size:29px;line-height:29px;color:#111;transform:scaleX(0.9973)">39051</span>
<span class="t g" style="left:357.81px;top:701px;font-size:18px;line-height:18px;color:#696969;transform:scaleX(0.9904)">Время работы</span>
<span class="t" style="left:357.53px;top:730px;font-size:29px;line-height:29px;color:#111;transform:scaleX(0.9708)">0:00:15:03</span>
<span class="t g" style="left:702.12px;top:547px;font-size:18px;line-height:18px;color:#696969;transform:scaleX(0.9812)">Базовая скорость:</span>
<span class="t s" style="left:940.90px;top:547px;font-size:18px;line-height:18px;color:#111;transform:scaleX(0.9162)">2,40 ГГц</span>
<span class="t g" style="left:703.10px;top:574px;font-size:18px;line-height:18px;color:#696969;transform:scaleX(0.9721)">Сокетов:</span>
<span class="t s" style="left:940.90px;top:574px;font-size:18px;line-height:18px;color:#111;transform:scaleX(0.7800)">2</span>
<span class="t g" style="left:703.10px;top:601px;font-size:18px;line-height:18px;color:#696969;transform:scaleX(0.8985)">Ядра:</span>
<span class="t s" style="left:940.90px;top:601px;font-size:18px;line-height:18px;color:#111;transform:scaleX(0.8346)">24</span>
<span class="t g" style="left:703.10px;top:628px;font-size:18px;line-height:18px;color:#696969;transform:scaleX(1.0197)">Логических процессоров:</span>
<span class="t s" style="left:940.90px;top:628px;font-size:18px;line-height:18px;color:#111;transform:scaleX(0.8346)">48</span>
<span class="t g" style="left:702.13px;top:655px;font-size:18px;line-height:18px;color:#696969;transform:scaleX(0.9712)">Виртуализация:</span>
<span class="t s" style="left:940.90px;top:655px;font-size:18px;line-height:18px;color:#111;transform:scaleX(1.0187)">Отключено</span>
<span class="t g" style="left:702.10px;top:683px;font-size:18px;line-height:18px;color:#696969;transform:scaleX(1.0003)">Поддержка Hyper-V:</span>
<span class="t s" style="left:940.90px;top:683px;font-size:18px;line-height:18px;color:#111;transform:scaleX(0.8409)">Да</span>
<span class="t g" style="left:702.12px;top:710px;font-size:18px;line-height:18px;color:#696969;transform:scaleX(0.9850)">Кэш L1:</span>
<span class="t s" style="left:939.94px;top:710px;font-size:18px;line-height:18px;color:#111;transform:scaleX(0.9633)">1,5 МБ</span>
<span class="t g" style="left:702.12px;top:737px;font-size:18px;line-height:18px;color:#696969;transform:scaleX(0.9850)">Кэш L2:</span>
<span class="t s" style="left:940.90px;top:737px;font-size:18px;line-height:18px;color:#111;transform:scaleX(0.9461)">6,0 МБ</span>
<span class="t g" style="left:702.12px;top:764px;font-size:18px;line-height:18px;color:#696969;transform:scaleX(0.9850)">Кэш L3:</span>
<span class="t s" style="left:940.90px;top:764px;font-size:18px;line-height:18px;color:#111;transform:scaleX(0.9254)">60,0 МБ</span>
<span class="t s" style="left:48.92px;top:846px;font-size:17.5px;line-height:18px;color:#111;transform:scaleX(1.0792)">Меньше</span>
<span class="t s" style="left:179.00px;top:846px;font-size:17.5px;line-height:18px;color:#24578c;transform:scaleX(1.0370)">Открыть монитор ресурсов</span>
</body></html>
